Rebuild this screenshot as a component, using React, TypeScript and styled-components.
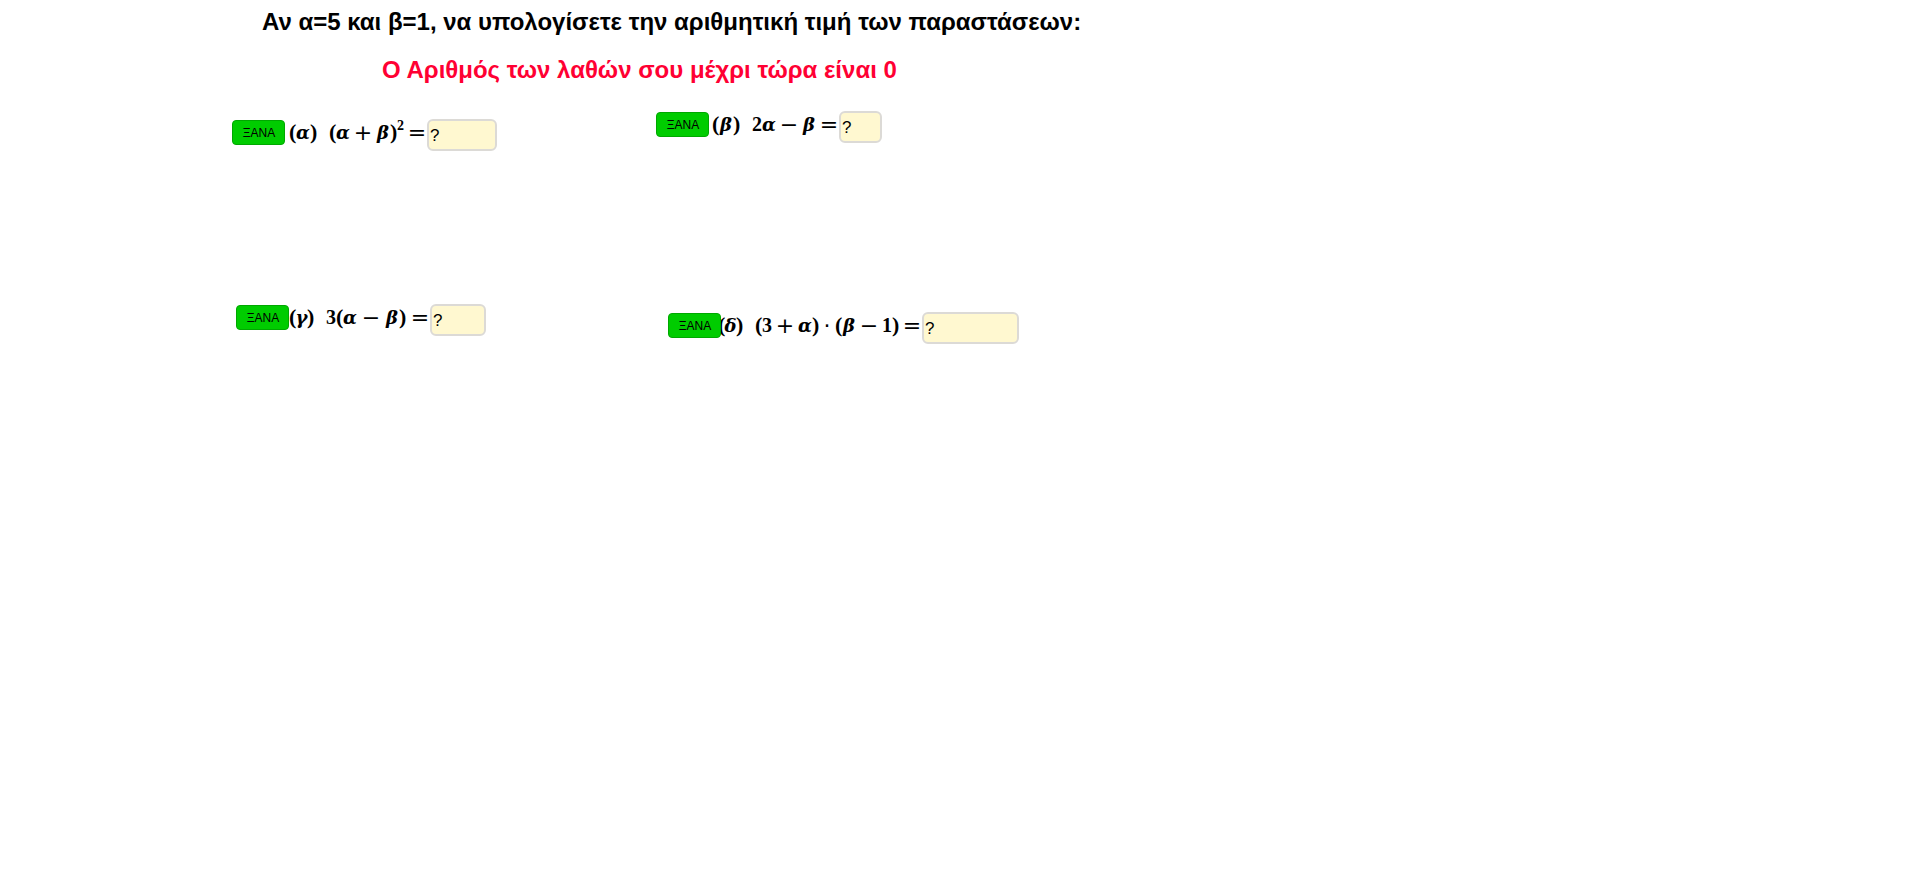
import React, { useState } from "react";
import styled, { createGlobalStyle } from "styled-components";

const GlobalStyle = createGlobalStyle`
  body {
    margin: 0;
    background: #ffffff;
    color: #000000;
    font-family: "Liberation Sans", Arial, sans-serif;
  }
`;

const Page = styled.main`
  display: flex;
  flex-direction: column;
  padding: 8px 0 0 232px;
`;

const Title = styled.h1`
  margin: 0 0 20px 30px;
  font-size: 24px;
  line-height: 28px;
  font-weight: bold;
`;

const MistakeCount = styled.p`
  margin: 0 0 27px 150px;
  font-size: 24px;
  line-height: 28px;
  font-weight: bold;
  color: #ff0033;
`;

const Exercises = styled.div`
  display: grid;
  grid-template-columns: 424px 1fr;
  row-gap: 153px;
`;

const Exercise = styled.form<{ $top?: number; $left?: number }>`
  display: flex;
  align-items: flex-end;
  align-self: start;
  padding: ${(p) => p.$top ?? 0}px 0 0 ${(p) => p.$left ?? 0}px;
`;

const RetryButton = styled.button`
  flex: none;
  z-index: 1;
  width: 53px;
  height: 25px;
  margin: 0 0 6px;
  padding: 0 0 0 1px;
  border: 1px solid #00a800;
  border-radius: 4px;
  background: #00cc00;
  color: #000000;
  font-family: "Liberation Sans", Arial, sans-serif;
  font-size: 12px;
  line-height: 20px;
`;

const Formula = styled.label<{ $indent: number; $space?: number; $end?: number }>`
  display: flex;
  height: 25px;
  margin: 0 ${(p) => p.$end ?? 3}px 6px ${(p) => p.$indent}px;
  font-family: "Liberation Serif", "Times New Roman", serif;
  font-size: 20px;
  line-height: 25px;
  font-weight: bold;
  --space: ${(p) => p.$space ?? 6}px;
`;

const Part = styled.span`
  display: flex;
  margin-right: 12px;
`;

const Paren = styled.span`
  width: 7px;
  font-size: 22px;
  line-height: 23px;
  text-align: center;
`;

const Num = styled.span`
  width: 10px;
`;

const Power = styled.sup`
  width: 7px;
  font-size: 14px;
  line-height: 12px;
  vertical-align: baseline;
`;

const Variable = styled.i<{ $width?: number }>`
  display: flex;
  justify-content: center;
  width: ${(p) => p.$width ?? 14}px;
  font-family: "DejaVu Serif", serif;
  font-size: 18px;
  font-weight: bold;
`;

const Operator = styled.span<{ $width?: number; $last?: boolean }>`
  display: flex;
  justify-content: center;
  width: ${(p) => p.$width ?? 14}px;
  margin: 0 ${(p) => (p.$last ? "0" : "var(--space)")} 0 var(--space);
  font-family: "DejaVu Sans", sans-serif;
  font-size: 22px;
  font-weight: normal;
`;

const Answer = styled.input<{ $width: number }>`
  flex: none;
  box-sizing: border-box;
  width: ${(p) => p.$width}px;
  height: 32px;
  margin: 0;
  padding: 1px 1px 0;
  border: 2px solid #dcdad6;
  border-radius: 6px;
  background: #fff8d0;
  color: #000000;
  font-family: "Liberation Sans", Arial, sans-serif;
  font-size: 17px;
  line-height: 27px;
  outline: none;
`;

type ExerciseRowProps = {
  id: string;
  letter: React.ReactNode;
  children: React.ReactNode;
  answerWidth: number;
  indent: number;
  space?: number;
  end?: number;
  top?: number;
  left?: number;
};

function ExerciseRow(p: ExerciseRowProps) {
  const [value, setValue] = useState("?");
  return (
    <Exercise $top={p.top} $left={p.left} onSubmit={(e) => e.preventDefault()}>
      <RetryButton type="button" onClick={() => setValue("?")}>
        ΞΑΝΑ
      </RetryButton>
      <Formula htmlFor={p.id} $indent={p.indent} $space={p.space} $end={p.end}>
        <Part>
          <Paren>(</Paren>
          {p.letter}
          <Paren>)</Paren>
        </Part>
        {p.children}
        <Operator $last>=</Operator>
      </Formula>
      <Answer
        id={p.id}
        $width={p.answerWidth}
        value={value}
        onChange={(e) => setValue(e.target.value)}
      />
    </Exercise>
  );
}

export default function App() {
  return (
    <>
      <GlobalStyle />
      <Page>
        <Title>Αν α=5 και β=1, να υπολογίσετε την αριθμητική τιμή των παραστάσεων:</Title>
        <MistakeCount>Ο Αριθμός των λαθών σου μέχρι τώρα είναι 0</MistakeCount>
        <Exercises>
          <ExerciseRow
            id="answer-a"
            letter={<Variable>α</Variable>}
            answerWidth={70}
            indent={4}
            end={3}
            top={8}
          >
            <Paren>(</Paren>
            <Variable>α</Variable>
            <Operator>+</Operator>
            <Variable>β</Variable>
            <Paren>)</Paren>
            <Power>2</Power>
          </ExerciseRow>
          <ExerciseRow
            id="answer-b"
            letter={<Variable>β</Variable>}
            answerWidth={43}
            indent={3}
            end={3}
          >
            <Num>2</Num>
            <Variable>α</Variable>
            <Operator>−</Operator>
            <Variable>β</Variable>
          </ExerciseRow>
          <ExerciseRow
            id="answer-c"
            letter={<Variable $width={11}>γ</Variable>}
            answerWidth={56}
            indent={0}
            space={7}
            left={4}
          >
            <Num>3</Num>
            <Paren>(</Paren>
            <Variable>α</Variable>
            <Operator>−</Operator>
            <Variable>β</Variable>
            <Paren>)</Paren>
          </ExerciseRow>
          <ExerciseRow
            id="answer-d"
            letter={<Variable $width={11}>δ</Variable>}
            answerWidth={97}
            indent={-3}
            end={3}
            top={8}
            left={12}
          >
            <Paren>(</Paren>
            <Num>3</Num>
            <Operator>+</Operator>
            <Variable>α</Variable>
            <Paren>)</Paren>
            <Operator $width={4}>·</Operator>
            <Paren>(</Paren>
            <Variable>β</Variable>
            <Operator>−</Operator>
            <Num>1</Num>
            <Paren>)</Paren>
          </ExerciseRow>
        </Exercises>
      </Page>
    </>
  );
}
